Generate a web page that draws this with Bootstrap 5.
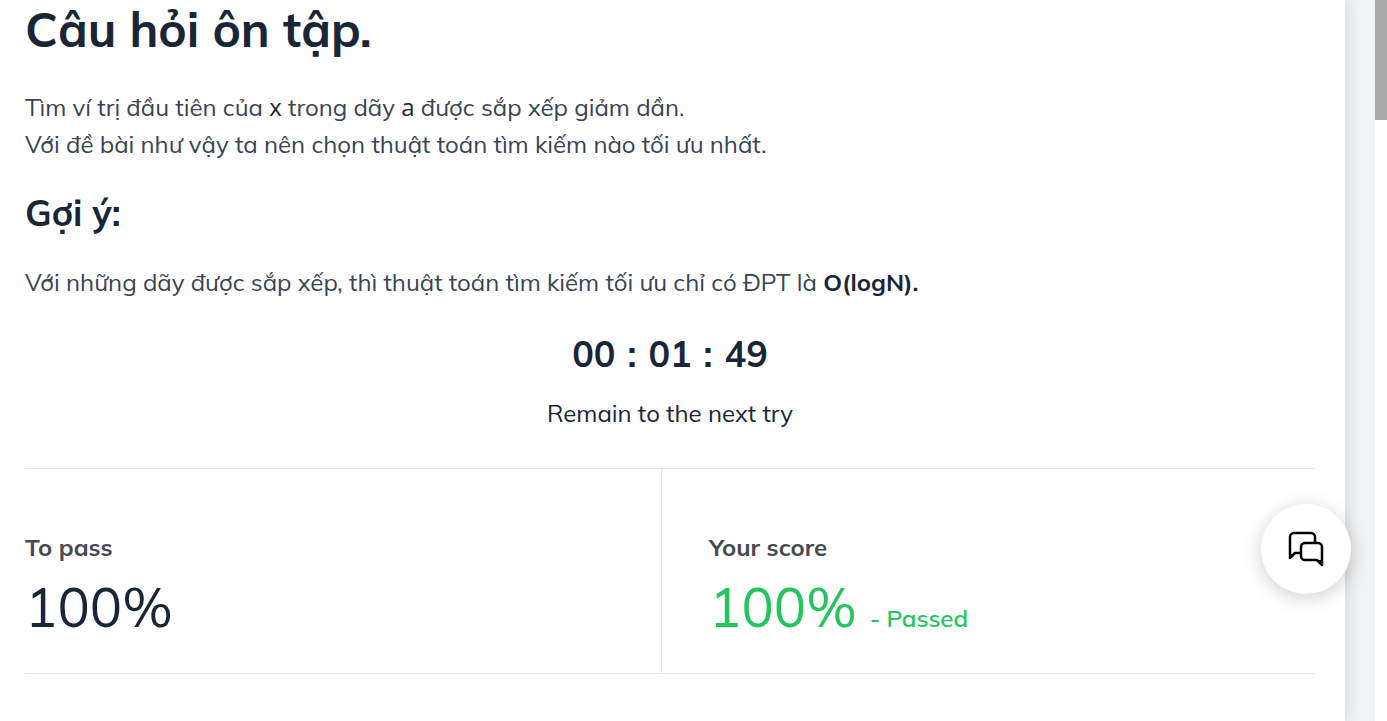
<!DOCTYPE html>
<html lang="vi">
<head>
<meta charset="utf-8">
<meta name="viewport" content="width=device-width, initial-scale=1">
<title>Câu hỏi ôn tập</title>
<link href="https://cdn.jsdelivr.net/npm/bootstrap@5.3.0/dist/css/bootstrap.min.css" rel="stylesheet">
<style>
  body { font-family: Mulish, Muli, "Open Sans", "Noto Sans", sans-serif; color: #192638; background: #f1f3f5; overflow: hidden; }
  .lesson { background: #fff; box-shadow: 0 0 16px rgba(0, 0, 0, .15); padding: 0 30px 0 25px; z-index: 1; }
  .lesson-title { font-size: 48px; line-height: 58px; font-weight: 700; margin-bottom: 31px; }
  .prose { font-size: 24px; line-height: 37px; font-weight: 400; margin-bottom: 27px; color: #384454; }
  .prose b { font-weight: 700; color: #192638; }
  .prose .variable { font-family: "Open Sans", "Noto Sans", sans-serif; font-size: 24px; font-weight: 500; line-height: 1; color: #192638; }
  .hint-title { font-size: 36px; line-height: 46px; font-weight: 700; margin-bottom: 28px; }
  .timer { font-size: 36px; line-height: 46px; font-weight: 700; margin: 30px 0 18px; gap: 12px; }
  .timer-note { font-size: 24px; line-height: 36px; margin-bottom: 37px; }
  .results { border-top: 1px solid #e5e7e9; border-bottom: 1px solid #e5e7e9; }
  .result { padding: 60px 0 16px; }
  .result-own { border-left: 1px solid #e5e7e9; padding-left: 47px; }
  .results .result:first-child { flex: 0 0 calc(50% - 9px); }
  .result-label { font-size: 24px; line-height: 36px; font-weight: 700; color: #454a50; margin-bottom: 4px; }
  .result-value { font-size: 54px; line-height: 77px; font-weight: 400; }
  .result-value.passed { color: #22c55e; gap: 13px; }
  .passed small { font-size: 24px; font-weight: 600; }
  .gutter { width: 30px; }
  .track { width: 12px; background: #fff; }
  .thumb { height: 120px; background: #a9a9a9; }
  .chat { position: fixed; right: 36px; bottom: 127px; width: 90px; height: 90px; z-index: 2; box-shadow: 0 4px 20px rgba(0, 0, 0, .18); background: #fff; }
</style>
</head>
<body>
<div class="d-flex min-vh-100">
  <main class="lesson flex-grow-1">
    <h1 class="lesson-title">Câu hỏi ôn tập.</h1>
    <p class="prose">Tìm ví trị đầu tiên của <code class="variable">x</code> trong dãy <code class="variable">a</code> được sắp xếp giảm dần.<br>Với đề bài như vậy ta nên chọn thuật toán tìm kiếm nào tối ưu nhất.</p>
    <h2 class="hint-title">Gợi ý:</h2>
    <p class="prose">Với những dãy được sắp xếp, thì thuật toán tìm kiếm tối ưu chỉ có ĐPT là <b>O(logN).</b></p>
    <div class="text-center">
      <div class="timer d-flex justify-content-center" role="timer"><span>00</span><span>:</span><span>01</span><span>:</span><span>49</span></div>
      <p class="timer-note">Remain to the next try</p>
    </div>
    <section class="results d-flex">
      <div class="result">
        <div class="result-label">To pass</div>
        <div class="result-value">100%</div>
      </div>
      <div class="result result-own flex-grow-1">
        <div class="result-label">Your score</div>
        <div class="result-value passed d-flex align-items-baseline"><span>100%</span><small>- Passed</small></div>
      </div>
    </section>
  </main>
  <div class="gutter flex-shrink-0"></div>
  <div class="track flex-shrink-0"><div class="thumb"></div></div>
</div>
<button type="button" class="chat btn rounded-circle border-0 p-0 d-flex align-items-center justify-content-center" aria-label="Chat">
  <svg width="38" height="38" viewBox="0 0 38 38" fill="none" stroke="#000" stroke-width="2.500" stroke-linejoin="round" aria-hidden="true">
    <path d="M28 13V7a4 4 0 0 0-4-4H7a4 4 0 0 0-4 4v21l5-5h6"/>
    <path d="M18 13h13a4 4 0 0 1 4 4v18l-5-5H18a4 4 0 0 1-4-4v-9a4 4 0 0 1 4-4z"/>
    <path d="M3 24v4l4-4zM35 35l-5-5h5z" fill="#000" stroke="none"/>
  </svg>
</button>
<script src="https://cdn.jsdelivr.net/npm/bootstrap@5.3.0/dist/js/bootstrap.bundle.min.js"></script>
</body>
</html>
